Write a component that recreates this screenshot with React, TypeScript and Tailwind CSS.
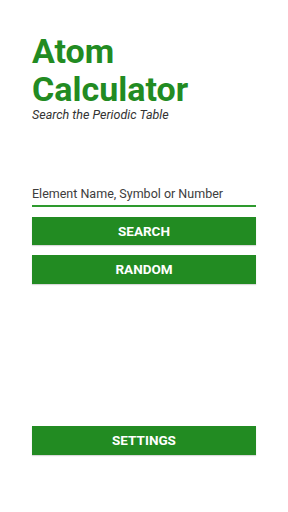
export default function App() {
  return (
    <div
      className="w-[288px] h-[512px] bg-white flex flex-col px-8 pt-[32px]"
      style={{ fontFamily: 'Roboto, "Liberation Sans", sans-serif' }}
    >
      {/* Title */}
      <h1 className="text-[34px] leading-[38px] font-bold text-[#228b22]">
        Atom
        <br />
        Calculator
      </h1>
      <p className="text-[12.5px] leading-[14px] italic text-[#333333]">Search the Periodic Table</p>

      {/* Search field */}
      <div className="mt-[59px] border-b-2 border-[#2e9a2e] pb-[0px]">
        <input
          type="text"
          placeholder="Element Name, Symbol or Number"
          className="w-full text-[12.5px] leading-[16px] h-4 outline-none bg-transparent placeholder:text-[#3d3d3d] text-[#222]"
        />
      </div>

      <button className="mt-[10px] h-[28px] w-full bg-[#228b22] text-white text-[13.5px] font-bold shadow-[0_1px_1px_rgba(0,0,0,0.15)]">
        SEARCH
      </button>
      <button className="mt-[10px] h-[29px] w-full bg-[#228b22] text-white text-[13.5px] font-bold shadow-[0_1px_1px_rgba(0,0,0,0.15)]">
        RANDOM
      </button>

      <div className="flex-1" />

      <button className="mb-[57px] h-[29px] w-full bg-[#228b22] text-white text-[13.5px] font-bold shadow-[0_1px_1px_rgba(0,0,0,0.15)]">
        SETTINGS
      </button>
    </div>
  );
}
